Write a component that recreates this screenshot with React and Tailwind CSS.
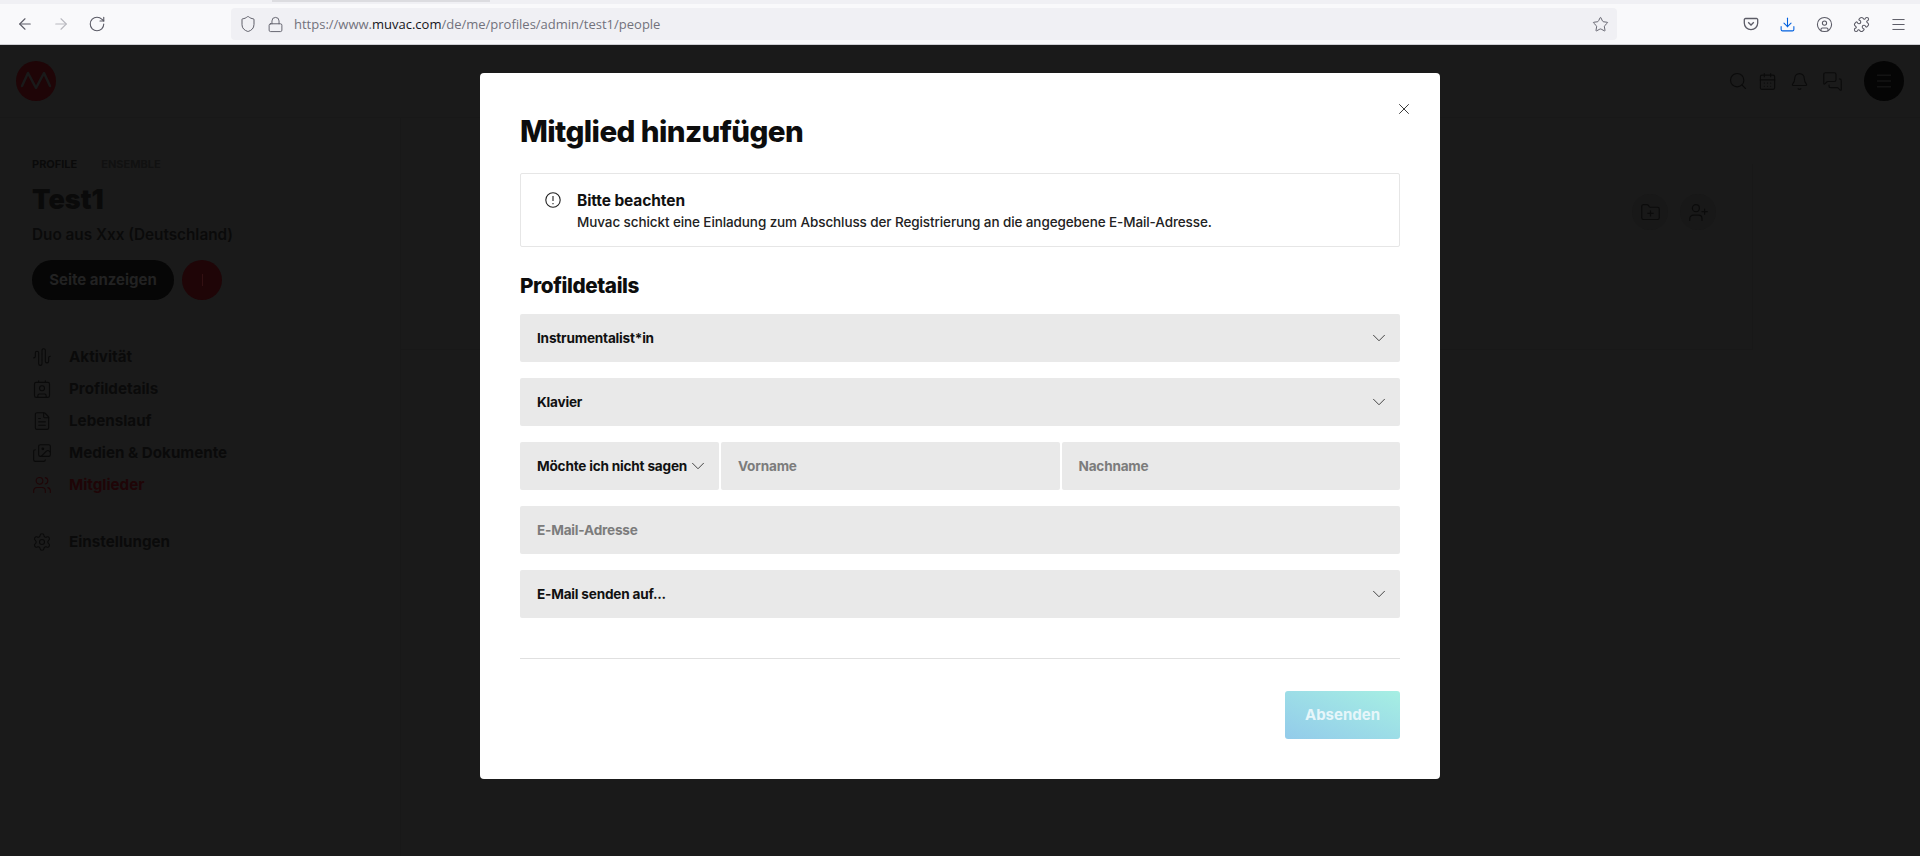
import React from "react";
import { Search, CalendarDays, Bell, MessagesSquare, AudioWaveform, Contact, FileText, Images, Users, Settings, FolderPlus, UserPlus, ChevronDown, X, ArrowLeft, ArrowRight, RotateCw, Shield, Lock, Star, Download, CircleUser, Puzzle, Menu } from "lucide-react";

const font = "font-['Inter','Liberation_Sans',sans-serif]";

function SelectField({ label, className = "" }) {
  return (
    <div className={`flex h-12 items-center justify-between rounded-[2px] bg-[#e9e9e9] pl-[17px] pr-[10px] ${className}`}>
      <span className="whitespace-nowrap text-[13.6px] font-bold tracking-[-0.2px] text-[#111]">{label}</span>
      <ChevronDown size={22} strokeWidth={0.9} className="-ml-[8px] shrink-0 text-[#222]" />
    </div>
  );
}

function InputField({ label, className = "" }) {
  return (
    <div className={`flex h-12 items-center rounded-[2px] bg-[#e9e9e9] pl-[17px] ${className}`}>
      <span className="text-[13.6px] font-bold tracking-[-0.2px] text-[#7c7c7c]">{label}</span>
    </div>
  );
}

function NavItem({ icon: Icon, label, active, className = "" }) {
  const colour = active ? "text-[#1f0507]" : "text-[#0a0a0a]";
  return (
    <div className={`flex h-8 items-center gap-[17px] ${colour} ${className}`}>
      <Icon size={20} strokeWidth={1.3} />
      <span className="text-[15.2px] font-bold">{label}</span>
    </div>
  );
}

function Toolbar() {
  return (
    <div className="relative h-[45px] border-b border-[#cfcfd4] bg-[#f9f9fb] text-[#5b5b66]">
      <div className="absolute left-0 right-0 top-0 h-[4px] bg-[#f0f0f4]" />
      <div className="absolute left-[272px] top-0 h-[2px] w-[218px] bg-[#dcdce0]" />
      <div className="relative flex h-full items-center pl-4 pt-[4px]">
        <ArrowLeft size={18} strokeWidth={1.5} />
        <ArrowRight size={18} strokeWidth={1.5} className="ml-[18px] text-[#b9b9c0]" />
        <RotateCw size={18} strokeWidth={1.5} className="ml-[18px]" />
        <div className="ml-[125px] flex h-8 w-[1386px] items-center rounded-[4px] bg-[#f0f0f4] pl-[8px] pr-2">
          <Shield size={18} strokeWidth={1.3} />
          <Lock size={17} strokeWidth={1.3} className="ml-[10px]" />
          <span className="ml-[10px] pt-[1px] font-['Open_Sans',sans-serif] text-[13px] text-[#72727c]">
            https://www.<span className="text-[#15141a]">muvac.com</span>/de/me/profiles/admin/test1/people
          </span>
          <Star size={17} strokeWidth={1.3} className="ml-auto" />
        </div>
        <div className="ml-[126px] flex items-center gap-[20px]">
          <svg width="16" height="16" viewBox="0 0 16 16" fill="none" stroke="currentColor" strokeWidth="1.3">
            <path d="M2.500 2.500h11a1.200 1.200 0 0 1 1.200 1.200V7a6.700 6.700 0 0 1-13.400 0V3.700a1.200 1.200 0 0 1 1.200-1.200z" />
            <path d="M5.200 6.300 8 9l2.800-2.700" />
          </svg>
          <Download size={17} strokeWidth={1.5} className="text-[#0060df]" />
          <CircleUser size={17} strokeWidth={1.5} />
          <Puzzle size={17} strokeWidth={1.5} />
          <Menu size={17} strokeWidth={1.4} />
        </div>
      </div>
    </div>
  );
}

function Backdrop() {
  return (
    <div className={`flex h-[811px] flex-col bg-[#1a1a1a] ${font}`}>
      <header className="flex h-[73px] items-center justify-between border-b border-[#181818] pl-4 pr-4">
        <svg width="40" height="40" viewBox="0 0 40 40" fill="none">
          <circle cx="20" cy="20" r="20" fill="#1f0507" />
          <path d="M6 25 12 12l8 15 8-15 6 13" stroke="#1a1a1a" strokeWidth="2.500" strokeLinecap="round" strokeLinejoin="round" />
        </svg>
        <div className="flex items-center text-[#0b0b0b]">
          <Search size={20} strokeWidth={1.4} />
          <CalendarDays size={19} strokeWidth={1.4} className="ml-[10px]" />
          <Bell size={19} strokeWidth={1.4} className="ml-[13px]" />
          <MessagesSquare size={21} strokeWidth={1.3} className="ml-[13px]" />
          <div className="ml-[21px] flex h-10 w-10 items-center justify-center rounded-full bg-[#050505]">
            <Menu size={20} strokeWidth={1.2} className="text-[#1c1c1c]" />
          </div>
        </div>
      </header>
      <div className="flex flex-1">
        <aside className="w-[401px] border-r border-[#181818] pl-8 pt-[39px]">
          <div className="flex h-[14px] items-center text-[11px] font-bold">
            <span className="text-[#0a0a0a]">PROFILE</span>
            <span className="ml-[24px] text-[#111111]">ENSEMBLE</span>
          </div>
          <h2 className="mt-[7px] text-[27px] font-black leading-[44px] text-[#0a0a0a]">Test1</h2>
          <p className="mt-[2px] text-[15.3px] font-semibold leading-[22px] text-[#0a0a0a]">Duo aus Xxx (Deutschland)</p>
          <div className="mt-[14px] flex items-center gap-2">
            <div className="flex h-10 w-[142px] items-center justify-center rounded-full bg-[#060606] text-[15px] font-bold text-[#222222]">Seite anzeigen</div>
            <div className="flex h-10 w-10 items-center justify-center rounded-full bg-[#1f0507]">
              <div className="h-3 w-px bg-[#331012]" />
            </div>
          </div>
          <nav className="mt-[41px]">
            <NavItem icon={AudioWaveform} label="Aktivität" />
            <NavItem icon={Contact} label="Profildetails" />
            <NavItem icon={FileText} label="Lebenslauf" />
            <NavItem icon={Images} label="Medien & Dokumente" />
            <NavItem icon={Users} label="Mitglieder" active />
            <NavItem icon={Settings} label="Einstellungen" className="mt-[25px]" />
          </nav>
        </aside>
        <main className="flex-1 pr-[167px] pt-[46px]">
          <div className="flex h-[186px] justify-end gap-3 border-r border-b border-[#181818] pr-[36px] pt-[30px]">
            <div className="flex h-9 w-9 items-center justify-center rounded-full bg-[#181818] text-[#0b0b0b]">
              <FolderPlus size={21} strokeWidth={1.3} />
            </div>
            <div className="flex h-9 w-9 items-center justify-center rounded-full bg-[#181818] text-[#0b0b0b]">
              <UserPlus size={21} strokeWidth={1.3} />
            </div>
          </div>
        </main>
      </div>
    </div>
  );
}

function Modal() {
  return (
    <div className={`absolute left-[480px] top-[73px] h-[706px] w-[960px] rounded-[4px] bg-white px-10 pt-[38px] ${font}`}>
      <X size={18} strokeWidth={1.1} className="absolute right-[27px] top-[27px] text-[#111]" />
      <h1 className="text-[29.600px] font-extrabold leading-10 tracking-[-0.6px] text-[#0d0d0d]">Mitglied hinzufügen</h1>
      <div className="mt-[22px] flex h-[74px] rounded-[2px] border border-[#e6e6e6] pl-[24px] pt-[16px]">
        <svg width="16" height="16" viewBox="0 0 16 16" fill="none" stroke="#222" strokeWidth="1.100" className="mt-[2px]">
          <circle cx="8" cy="8" r="7.200" />
          <path d="M8 4v5M8 11v1.200" />
        </svg>
        <div className="ml-[16px]">
          <p className="text-[15.500px] font-bold leading-[22px] tracking-[-0.1px] text-[#111]">Bitte beachten</p>
          <p className="text-[13.500px] font-medium leading-[21px] tracking-[-0.1px] text-[#222]">Muvac schickt eine Einladung zum Abschluss der Registrierung an die angegebene E-Mail-Adresse.</p>
        </div>
      </div>
      <h2 className="mt-[25px] text-[20.700px] font-extrabold leading-7 tracking-[-0.4px] text-[#0d0d0d]">Profildetails</h2>
      <div className="mt-[14px] flex flex-col gap-4">
        <SelectField label="Instrumentalist*in" />
        <SelectField label="Klavier" />
        <div className="flex gap-[2px]">
          <SelectField label="Möchte ich nicht sagen" className="w-[199px]" />
          <InputField label="Vorname" className="flex-1" />
          <InputField label="Nachname" className="flex-1" />
        </div>
        <InputField label="E-Mail-Adresse" />
        <SelectField label="E-Mail senden auf..." />
      </div>
      <div className="mt-10 h-px bg-[#e0e0e0]" />
      <div className="mt-[32px] flex justify-end">
        <div className="flex h-12 w-[115px] items-center justify-center rounded-[3px] bg-gradient-to-tr from-[#93cbea] to-[#a6efe3] pt-[1px] text-[15px] font-bold text-[#e6f6fa]">Absenden</div>
      </div>
    </div>
  );
}

export default function App() {
  return (
    <div className="relative h-[856px] w-[1920px] overflow-hidden">
      <Toolbar />
      <Backdrop />
      <Modal />
    </div>
  );
}
